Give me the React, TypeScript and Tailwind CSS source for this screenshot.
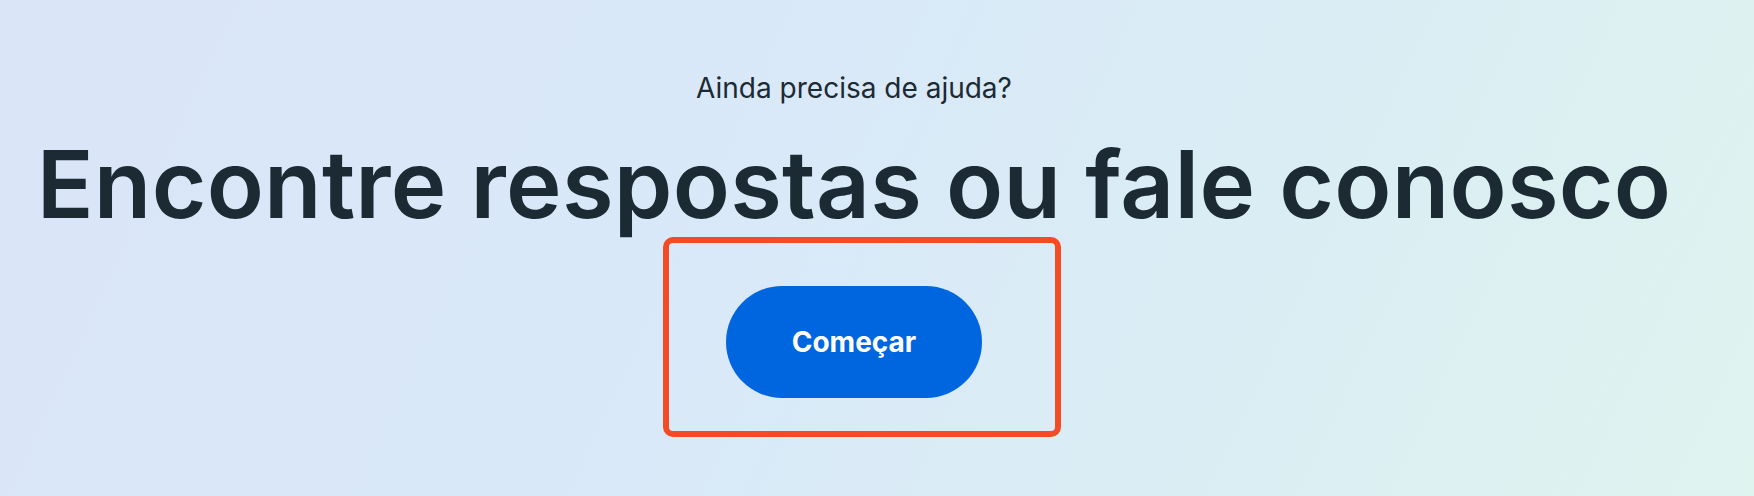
export default function App() {
  return (
    <div className="w-full h-[496px] overflow-hidden bg-[linear-gradient(115deg,#dae5f8_0%,#d9e9f8_45%,#dbeef3_75%,#dff4ef_100%)]">
      <div className="w-[1708px] flex flex-col items-center pt-[74px] font-['Inter',sans-serif] text-[#1c2a33]">
        <p className="text-[28px] leading-none">Ainda precisa de ajuda?</p>
        <h1 className="mt-[35px] text-[94px] leading-none font-semibold tracking-[0.25px] whitespace-nowrap">
          Encontre respostas ou fale conosco
        </h1>
        <div className="mt-[6px] ml-[16px] border-[6px] border-[#f54a26] rounded-[10px] pl-[57px] pr-[73px] pt-[43px] pb-[33px]">
          <button className="w-[256px] h-[112px] rounded-full bg-[#0066e0] text-white text-[28px] font-bold leading-none flex items-center justify-center">
            Começar
          </button>
        </div>
      </div>
    </div>
  );
}
